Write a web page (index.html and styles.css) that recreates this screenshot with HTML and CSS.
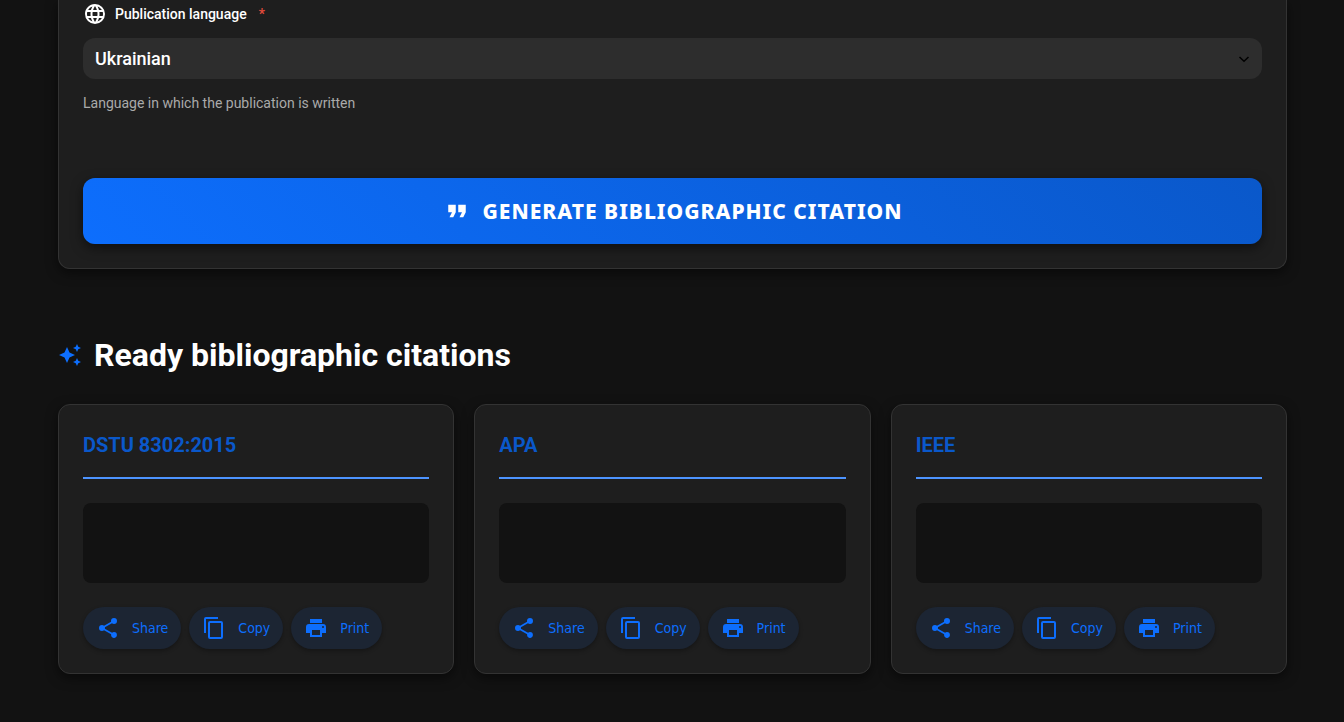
FILE: index.html
```html
<!DOCTYPE html>
<html lang="en">
<head>
<meta charset="utf-8">
<title>Bibliographic citation generator</title>
<link rel="stylesheet" href="styles.css">
</head>
<body>
<svg class="sprite" aria-hidden="true">
  <symbol id="i-share" viewBox="0 0 24 24"><path d="M18 16.08c-.76 0-1.44.3-1.96.77L8.91 12.7c.05-.23.09-.46.09-.7s-.04-.47-.09-.7l7.05-4.11c.54.5 1.25.81 2.04.81a3 3 0 0 0 3-3 3 3 0 0 0-3-3 3 3 0 0 0-3 3c0 .24.04.47.09.7L8.04 9.81C7.5 9.31 6.79 9 6 9a3 3 0 0 0-3 3 3 3 0 0 0 3 3c.79 0 1.5-.31 2.04-.81l7.12 4.15c-.05.21-.08.43-.08.66 0 1.61 1.31 2.91 2.92 2.91s2.92-1.3 2.92-2.91A2.92 2.92 0 0 0 18 16.08Z"/></symbol>
  <symbol id="i-copy" viewBox="0 0 24 24"><path d="M19 21H8V7h11m0-2H8a2 2 0 0 0-2 2v14a2 2 0 0 0 2 2h11a2 2 0 0 0 2-2V7a2 2 0 0 0-2-2m-3-4H4a2 2 0 0 0-2 2v14h2V3h12V1Z"/></symbol>
  <symbol id="i-print" viewBox="0 0 24 24"><path d="M18 3H6v4h12m1 5a1 1 0 0 1-1-1 1 1 0 0 1 1-1 1 1 0 0 1 1 1 1 1 0 0 1-1 1m-3 7H8v-5h8m3-6H5a3 3 0 0 0-3 3v6h4v4h12v-4h4v-6a3 3 0 0 0-3-3Z"/></symbol>
</svg>
<main class="page">
  <form class="form-card">
    <label class="field-label" for="language">
      <svg class="icon" viewBox="0 0 24 24" aria-hidden="true"><path d="M16.36 14c.08-.66.14-1.32.14-2s-.06-1.34-.14-2h3.38c.16.64.26 1.31.26 2s-.1 1.36-.26 2m-5.15 5.56c.6-1.11 1.06-2.31 1.38-3.56h2.95a8.03 8.03 0 0 1-4.33 3.56M14.34 14H9.66c-.1-.66-.16-1.32-.16-2s.06-1.35.16-2h4.68c.09.65.16 1.32.16 2s-.07 1.34-.16 2M12 19.96c-.83-1.2-1.5-2.53-1.91-3.96h3.82c-.41 1.43-1.08 2.76-1.91 3.96M8 8H5.08A7.92 7.92 0 0 1 9.4 4.44C8.8 5.55 8.35 6.75 8 8m-2.92 8H8c.35 1.25.8 2.45 1.4 3.56A8 8 0 0 1 5.08 16m-.82-2C4.1 13.36 4 12.69 4 12s.1-1.36.26-2h3.38c-.08.66-.14 1.32-.14 2s.06 1.34.14 2M12 4.03c.83 1.2 1.5 2.54 1.91 3.97h-3.82c.41-1.43 1.08-2.77 1.91-3.97M18.92 8h-2.95a15.7 15.7 0 0 0-1.38-3.56c1.84.63 3.37 1.9 4.33 3.56M12 2C6.47 2 2 6.5 2 12a10 10 0 0 0 10 10 10 10 0 0 0 10-10A10 10 0 0 0 12 2Z"/></svg>
      <span>Publication language</span>
      <span class="required">*</span>
    </label>
    <div class="select-wrap">
      <select class="select" id="language" aria-describedby="language-hint"><option>Ukrainian</option><option>English</option></select>
      <svg class="chevron" viewBox="0 0 16 16" aria-hidden="true"><path d="M3.5 6 8 10.3 12.5 6"/></svg>
    </div>
    <p class="hint" id="language-hint">Language in which the publication is written</p>
    <button class="generate" type="button">
      <svg class="icon generate-icon" viewBox="0 0 24 24" aria-hidden="true"><path d="M14 17h3l2-4V7h-6v6h3M6 17h3l2-4V7H5v6h3Z"/></svg>
      <span>GENERATE BIBLIOGRAPHIC CITATION</span>
    </button>
  </form>

  <h2 class="heading">
    <svg class="icon heading-icon" viewBox="0 0 24 24" aria-hidden="true"><path d="m19 1-1.26 2.75L15 5l2.74 1.26L19 9l1.25-2.74L23 5l-2.75-1.25M9 4 6.5 9.5 1 12l5.5 2.5L9 20l2.5-5.5L17 12l-5.500-2.500M19 15l-1.260 2.740L15 19l2.740 1.250L19 23l1.250-2.750L23 19l-2.750-1.260"/></svg>
    <span>Ready bibliographic citations</span>
  </h2>

  <div class="cards">
    <section class="card">
      <h3 class="card-title">DSTU 8302:2015</h3>
      <div class="output"></div>
      <div class="actions">
        <button class="chip" type="button"><svg class="icon" aria-hidden="true"><use href="#i-share"/></svg><span>Share</span></button>
        <button class="chip" type="button"><svg class="icon" aria-hidden="true"><use href="#i-copy"/></svg><span>Copy</span></button>
        <button class="chip" type="button"><svg class="icon" aria-hidden="true"><use href="#i-print"/></svg><span>Print</span></button>
      </div>
    </section>
    <section class="card">
      <h3 class="card-title">APA</h3>
      <div class="output"></div>
      <div class="actions">
        <button class="chip" type="button"><svg class="icon" aria-hidden="true"><use href="#i-share"/></svg><span>Share</span></button>
        <button class="chip" type="button"><svg class="icon" aria-hidden="true"><use href="#i-copy"/></svg><span>Copy</span></button>
        <button class="chip" type="button"><svg class="icon" aria-hidden="true"><use href="#i-print"/></svg><span>Print</span></button>
      </div>
    </section>
    <section class="card">
      <h3 class="card-title">IEEE</h3>
      <div class="output"></div>
      <div class="actions">
        <button class="chip" type="button"><svg class="icon" aria-hidden="true"><use href="#i-share"/></svg><span>Share</span></button>
        <button class="chip" type="button"><svg class="icon" aria-hidden="true"><use href="#i-copy"/></svg><span>Copy</span></button>
        <button class="chip" type="button"><svg class="icon" aria-hidden="true"><use href="#i-print"/></svg><span>Print</span></button>
      </div>
    </section>
  </div>
</main>
</body>
</html>
```
FILE: styles.css
```css
* { box-sizing: border-box; }

body {
  margin: 0;
  background: #121212;
  color: #fff;
  font-family: Roboto, sans-serif;
}

.sprite { display: none; }

.page { padding: 0 57px 48px 58px; }

.icon {
  width: 24px;
  height: 24px;
  flex: none;
  fill: currentColor;
}

.form-card,
.card {
  background: #1e1e1e;
  border: 1px solid #333;
  border-radius: 12px;
  box-shadow: 0 4px 12px rgba(0, 0, 0, 0.5);
}

.form-card {
  padding: 2px 24px 24px;
  border-top: 0;
  border-radius: 0 0 12px 12px;
}

.field-label {
  display: flex;
  align-items: center;
  gap: 8px;
  font-size: 14px;
  font-weight: 500;
  line-height: 24px;
}

.required { margin-left: 4px; color: #e74c3c; }

.select-wrap { position: relative; margin-top: 12px; }

.select {
  display: block;
  width: 100%;
  height: 41px;
  padding: 0 12px;
  appearance: none;
  background: #2d2d2d;
  border: 0;
  border-radius: 12px;
  color: #fff;
  font: 500 18px Roboto, sans-serif;
}

.chevron {
  position: absolute;
  right: 10px;
  top: 13px;
  width: 16px;
  height: 16px;
  fill: none;
  stroke: #000;
  stroke-width: 1.5;
  pointer-events: none;
}

.hint {
  margin: 14px 0 0;
  color: #aaa;
  font-size: 14px;
  line-height: 20px;
}

.generate {
  display: flex;
  align-items: center;
  justify-content: center;
  gap: 10px;
  width: 100%;
  height: 66px;
  margin-top: 65px;
  background: linear-gradient(45deg, #0d6efd, #0a58ca);
  border: 0;
  border-radius: 12px;
  box-shadow: 0 4px 12px rgba(0, 0, 0, 0.5);
  color: #fff;
  font: 800 21px "Noto Sans", sans-serif;
  letter-spacing: 1px;
}

.generate-icon {
  width: 30px;
  height: 30px;
}

.heading {
  display: flex;
  align-items: center;
  gap: 12px;
  margin: 66px 0 29px;
  font-size: 32px;
  line-height: 40px;
}

.heading-icon { color: #0d6efd; }

.cards {
  display: grid;
  grid-template-columns: repeat(3, 1fr);
  gap: 20px;
}

.card { padding: 24px; }

.card-title {
  margin: 0 0 24px;
  padding-bottom: 16px;
  border-bottom: 2px solid #4d94ff;
  color: #0a58ca;
  font-size: 20px;
  line-height: 32px;
}

.output {
  height: 80px;
  background: #121212;
  border-radius: 8px;
}

.actions {
  display: flex;
  gap: 8px;
  margin-top: 24px;
}

.chip {
  display: flex;
  align-items: center;
  gap: 12px;
  height: 42px;
  padding: 0 13px;
  background: #1c2533;
  border: 0;
  border-radius: 21px;
  box-shadow: 0 2px 4px rgba(0, 0, 0, 0.3);
  color: #0d6efd;
  font: 400 14px "DejaVu Sans Condensed", "Noto Sans", sans-serif;
}
```
